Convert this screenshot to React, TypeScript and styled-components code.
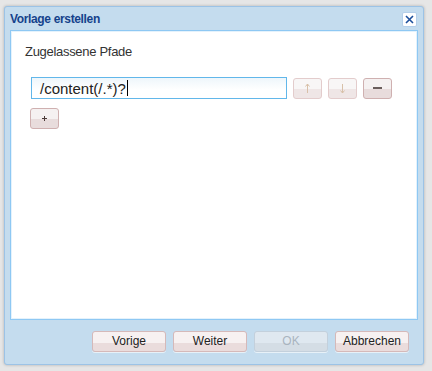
import React from "react";
import styled, { createGlobalStyle } from "styled-components";

const GlobalStyle = createGlobalStyle`
  html, body {
    margin: 0;
    padding: 0;
    background: #e6e6e6;
    font-family: "Liberation Sans", Arial, sans-serif;
  }
`;

const Page = styled.div`
  width: 432px;
  height: 371px;
  padding: 6px 8px 6px 4px;
  box-sizing: border-box;
  display: flex;
`;

const Dialog = styled.div`
  flex: 1;
  display: flex;
  flex-direction: column;
  background: #c4dcee;
  border: 1px solid #9cc3e6;
  border-radius: 3px;
  box-shadow: 0 0 3px rgba(0, 0, 0, 0.25);
`;

const Header = styled.div`
  height: 23px;
  display: flex;
  align-items: center;
  justify-content: space-between;
  padding: 0 6px 0 5px;
`;

const Title = styled.span`
  font-family: "Liberation Sans", Arial, sans-serif;
  font-weight: bold;
  font-size: 12px;
  color: #15428b;
  letter-spacing: -0.35px;
`;

const CloseButton = styled.button`
  width: 15px;
  height: 15px;
  padding: 0;
  margin-top: 2px;
  border: 1px solid #b5d0ea;
  border-radius: 2px;
  background: #fff;
  display: flex;
  align-items: center;
  justify-content: center;
`;

const Panel = styled.div`
  flex: 1;
  margin: 0 5px;
  background: #fff;
  border: 1px solid #8ec8f3;
  box-shadow: inset 0 0 0 1px #e4f2fc;
  padding: 13px 20px 0 20px;
`;

const Label = styled.div`
  font-size: 13px;
  color: #333;
  letter-spacing: -0.3px;
  margin-left: -6px;
  margin-bottom: 18px;
`;

const Row = styled.div`
  display: flex;
  align-items: center;
  gap: 6px;
  margin-bottom: 9px;
`;

const PathInput = styled.div`
  width: 256px;
  height: 22px;
  box-sizing: border-box;
  border: 1px solid #62b7ea;
  background: linear-gradient(#eef6fb, #fff 60%);
  font-size: 15px;
  color: #222;
  padding-left: 8px;
  display: flex;
  align-items: center;
`;

const Caret = styled.span`
  display: inline-block;
  width: 1px;
  height: 16px;
  background: #000;
  margin-left: 1px;
`;

const SmallButton = styled.button<{ $faded?: boolean }>`
  width: 29px;
  height: 21px;
  padding: 0;
  border: 1px solid ${(p) => (p.$faded ? "#e3cccc" : "#cfb0b0")};
  border-radius: 3px;
  background: ${(p) =>
    p.$faded
      ? "linear-gradient(#f8f6f6 0%, #f8f6f6 55%, #efe6e6 55%, #efe6e6 100%)"
      : "linear-gradient(#f5f1f1 0%, #f5f1f1 55%, #e8dcdc 55%, #e8dcdc 100%)"};
  display: flex;
  align-items: center;
  justify-content: center;
`;

const Footer = styled.div`
  height: 44px;
  display: flex;
  align-items: center;
  justify-content: flex-end;
  gap: 7px;
  padding-right: 14px;
`;

const FooterButton = styled.button<{ $disabled?: boolean }>`
  width: 74px;
  height: 21px;
  padding: 0;
  margin-top: -2px;
  font-family: "Liberation Sans", Arial, sans-serif;
  font-size: 12px;
  color: ${(p) => (p.$disabled ? "#a9b4bf" : "#222")};
  border: 1px solid ${(p) => (p.$disabled ? "#c3d0dc" : "#d5b9b9")};
  border-radius: 3px;
  background: ${(p) =>
    p.$disabled
      ? "linear-gradient(#dfe8f0 0%, #dfe8f0 60%, #d4dde5 60%, #d4dde5 100%)"
      : "linear-gradient(#f7f1f1 0%, #f7f1f1 60%, #eadcdc 60%, #eadcdc 100%)"};
  box-shadow: 0 1px 0 rgba(255, 255, 255, 0.6);
`;

const ArrowIcon = ({ down }: { down?: boolean }) => (
  <svg width="5" height="11" viewBox="0 0 5 11">
    <g transform={down ? "rotate(180 2.5 5.5)" : undefined}>
      <path d="M2.5 1 L2.5 10" stroke="#d8c0a8" strokeWidth="1" />
      <path d="M0.5 3.5 L2.5 1 L4.5 3.5" stroke="#d8c0a8" strokeWidth="1" fill="none" />
    </g>
  </svg>
);

const App: React.FC = () => {
  return (
    <>
      <GlobalStyle />
      <Page>
        <Dialog>
          <Header>
            <Title>Vorlage erstellen</Title>
            <CloseButton>
              <svg width="9" height="9" viewBox="0 0 9 9">
                <path d="M1 1 L8 8 M8 1 L1 8" stroke="#1d4f9b" strokeWidth="1.6" />
              </svg>
            </CloseButton>
          </Header>
          <Panel>
            <Label>Zugelassene Pfade</Label>
            <Row>
              <PathInput>
                /content(/.*)?
                <Caret />
              </PathInput>
              <SmallButton $faded>
                <ArrowIcon />
              </SmallButton>
              <SmallButton $faded>
                <ArrowIcon down />
              </SmallButton>
              <SmallButton>
                <svg width="9" height="2" viewBox="0 0 9 2">
                  <rect width="9" height="2" fill="#6a5e5c" />
                </svg>
              </SmallButton>
            </Row>
            <Row>
              <SmallButton style={{ marginLeft: -1 }}>
                <svg width="5" height="5" viewBox="0 0 5 5">
                  <path d="M2.5 0 V5 M0 2.5 H5" stroke="#4a3a38" strokeWidth="1" />
                </svg>
              </SmallButton>
            </Row>
          </Panel>
          <Footer>
            <FooterButton>Vorige</FooterButton>
            <FooterButton>Weiter</FooterButton>
            <FooterButton $disabled>OK</FooterButton>
            <FooterButton>Abbrechen</FooterButton>
          </Footer>
        </Dialog>
      </Page>
    </>
  );
};

export default App;
